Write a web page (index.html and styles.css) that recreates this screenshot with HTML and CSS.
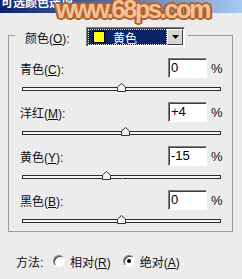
FILE: index.html
```html
<!DOCTYPE html>
<html lang="zh-CN">
<head>
  <meta charset="UTF-8" />
  <meta name="viewport" content="width=device-width, initial-scale=1.0"/>
  <title>可选颜色选项</title>
  <link rel="stylesheet" href="styles.css">
</head>
<body>

  <div class="titlebar">
    <span class="title">可选颜色选项</span>
  </div>
  <div class="watermark">www.68ps.com</div>

  <div class="group">
    <div class="legend">
      <span class="legend-label">颜色(<u>O</u>):</span>
      <div class="combo">
        <div class="combo-value">
          <span class="swatch"></span>
          <span>黄色</span>
        </div>
        <div class="combo-btn">
          <svg width="7" height="4" viewBox="0 0 7 4"><polygon points="0,0 7,0 3.5,4" fill="#000"/></svg>
        </div>
      </div>
    </div>

    <div class="channel">
      <div class="row">
        <span class="label">青色(<u>C</u>):</span>
        <div class="field">0</div>
        <span class="pct">%</span>
      </div>
      <div class="slider">
        <div class="track"></div>
        <svg class="thumb" style="left: 50%" width="9" height="9" viewBox="0 0 9 9"><polygon points="4.5,0.5 8.5,4 8.5,8.5 0.5,8.5 0.5,4" /></svg>
      </div>
    </div>

    <div class="channel">
      <div class="row">
        <span class="label">洋红(<u>M</u>):</span>
        <div class="field">+4</div>
        <span class="pct">%</span>
      </div>
      <div class="slider">
        <div class="track"></div>
        <svg class="thumb" style="left: 52%" width="9" height="9" viewBox="0 0 9 9"><polygon points="4.5,0.5 8.5,4 8.5,8.5 0.5,8.5 0.5,4" /></svg>
      </div>
    </div>

    <div class="channel">
      <div class="row">
        <span class="label">黄色(<u>Y</u>):</span>
        <div class="field">-15</div>
        <span class="pct">%</span>
      </div>
      <div class="slider">
        <div class="track"></div>
        <span class="origin"></span>
        <svg class="thumb" style="left: 42.5%" width="9" height="9" viewBox="0 0 9 9"><polygon points="4.5,0.5 8.5,4 8.5,8.5 0.5,8.5 0.5,4" /></svg>
      </div>
    </div>

    <div class="channel">
      <div class="row">
        <span class="label">黑色(<u>B</u>):</span>
        <div class="field">0</div>
        <span class="pct">%</span>
      </div>
      <div class="slider">
        <div class="track"></div>
        <svg class="thumb" style="left: 50%" width="9" height="9" viewBox="0 0 9 9"><polygon points="4.5,0.5 8.5,4 8.5,8.5 0.5,8.5 0.5,4" /></svg>
      </div>
    </div>
  </div>

  <div class="method">
    <span class="method-label">方法:</span>
    <span class="radio"></span>
    <span class="radio-text">相对(<u>R</u>)</span>
    <span class="radio checked"></span>
    <span class="radio-text">绝对(<u>A</u>)</span>
  </div>

</body>
</html>
```

FILE: styles.css
```css
body {
  margin: 0;
  width: 242px;
  height: 279px;
  overflow: hidden;
  position: relative;
  background-color: #ececec;
  font-family: "Liberation Sans", "Noto Sans CJK SC", sans-serif;
  font-size: 12px;
  color: #111;
}

u {
  text-decoration: underline;
  text-underline-offset: 1px;
}

.titlebar {
  height: 13px;
  overflow: hidden;
  background: linear-gradient(to right, #0a246a, #a6caf0);
}

.title {
  display: block;
  margin-top: -4px;
  padding-left: 1px;
  line-height: 14px;
  font-weight: bold;
  color: white;
}

/* site watermark laid over the dialog */
.watermark {
  position: absolute;
  left: 56px;
  top: -5px;
  font-family: "Liberation Sans", sans-serif;
  font-size: 25px;
  font-weight: bold;
  letter-spacing: -2.2px;
  color: #f1c29a;
  text-shadow:
    2px 0 0 #b5622c, -2px 0 0 #b5622c, 0 2px 0 #b5622c, 0 -2px 0 #b5622c,
    1px 1px 0 #b5622c, -1px -1px 0 #b5622c, 1px -1px 0 #b5622c, -1px 1px 0 #b5622c,
    2px 1px 0 #b5622c, -2px 1px 0 #b5622c, 2px -1px 0 #b5622c, -2px -1px 0 #b5622c,
    0 0 3px #c87a48;
}

.group {
  margin: 22px 9px 0 8px;
  border: 1px solid #9c9c9c;
  padding-bottom: 8px;
}

.legend {
  display: flex;
  align-items: center;
  width: max-content;
  margin: -9px 0 0 6px;
  padding: 0 3px 0 10px;
  background-color: #ececec;
}

.legend-label {
  width: 61px;
}

.combo {
  display: flex;
  box-sizing: border-box;
  width: 99px;
  height: 20px;
  padding: 1px;
  border: 1px solid;
  border-color: #808080 #fff #fff #808080;
  box-shadow: inset 1px 1px 0 #404040;
  background-color: white;
}

.combo-value {
  flex: 1;
  display: flex;
  align-items: center;
  background-color: #0a246a;
  outline: 1px dotted #e8e8e8;
  outline-offset: -1px;
  color: white;
}

.swatch {
  width: 10px;
  height: 10px;
  margin: 0 8px 0 5px;
  border: 1px solid #000;
  background-color: #ffff00;
}

.combo-btn {
  box-sizing: border-box;
  width: 16px;
  display: flex;
  align-items: center;
  justify-content: center;
  background-color: #d8d6d0;
  border: 1px solid;
  border-color: #fff #404040 #404040 #fff;
}

.channel {
  margin-top: 11px;
}

.row {
  display: flex;
  align-items: center;
  height: 20px;
  padding: 0 9px 0 11px;
}

.label {
  flex: 1;
}

.field {
  box-sizing: border-box;
  width: 39px;
  height: 20px;
  padding-left: 2px;
  border: 1px solid;
  border-color: #808080 #fff #fff #808080;
  box-shadow: inset 1px 1px 0 #404040;
  background-color: white;
  font-size: 13px;
  line-height: 18px;
  color: #000;
}

.pct {
  margin-left: 4px;
  width: 12px;
  font-size: 13px;
}

.slider {
  position: relative;
  height: 4px;
  margin: 9px 11px 0 13px;
}

.track {
  box-sizing: border-box;
  height: 4px;
  border: 1px solid #2c2c2c;
  background-color: #f6f6f6;
}

.origin {
  position: absolute;
  left: 50%;
  top: 2px;
  width: 1px;
  height: 3px;
  background-color: #c8c8c8;
}

.thumb {
  position: absolute;
  top: -4px;
  margin-left: -4.5px;
  fill: #f4f4f4;
  stroke: #333;
  stroke-width: 1;
}

.method {
  display: flex;
  align-items: center;
  height: 14px;
  margin-top: 22px;
  padding-left: 16px;
}

.method-label {
  width: 37px;
}

.radio {
  box-sizing: border-box;
  width: 12px;
  height: 12px;
  border-radius: 50%;
  border: 1px solid;
  border-color: #808080 #fff #fff #808080;
  box-shadow: inset 1px 1px 0 #404040;
  background-color: white;
  display: flex;
  align-items: center;
  justify-content: center;
}

.radio.checked::after {
  content: "";
  width: 4px;
  height: 4px;
  border-radius: 50%;
  background-color: #000;
}

.radio-text {
  margin: 0 12px 0 5px;
}
```
